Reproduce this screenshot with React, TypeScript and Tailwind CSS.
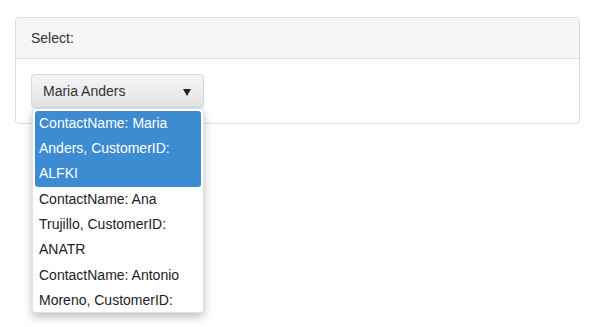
const options = [
  { name: "Maria Anders", id: "ALFKI" },
  { name: "Ana Trujillo", id: "ANATR" },
  { name: "Antonio Moreno", id: "ANTON" },
]

export default function App() {
  return (
    <div className="min-h-[327px] bg-white pt-[17px] font-['Helvetica_Neue','Liberation_Sans',Arial,sans-serif] text-[14px] text-[#333]">
      <div className="ml-[15px] mr-[14px] rounded-[4px] border border-[#ddd]">
        <div className="rounded-t-[3px] border-b border-[#ddd] bg-[#f5f5f5] px-[15px] py-[10px] leading-[20px]">
          Select:
        </div>

        <div className="p-[15px]">
          <div className="relative w-[173px]">
            <button className="flex h-[34px] w-full items-center justify-between rounded-[4px] border border-[#d6d6d6] bg-gradient-to-b from-[#f4f4f4] to-[#e4e4e4] pl-[11px] pr-[12px] text-left shadow-[0_1px_1px_rgba(0,0,0,0.08)]">
              <span>Maria Anders</span>
              <svg width="8" height="7" viewBox="0 0 8 7" className="mt-[2px]">
                <path d="M0 0 L8 0 L4 7 Z" fill="#222" />
              </svg>
            </button>

            <ul className="absolute left-px top-[34px] z-10 h-[205px] w-[172px] overflow-hidden rounded-[4px] border border-[#e2e2e2] bg-white p-[2px] shadow-[0_4px_10px_rgba(0,0,0,0.25)]">
              {options.map((o, i) => (
                <li
                  key={o.id}
                  className={
                    i === 0
                      ? "rounded-[3px] bg-[#3d8bd1] px-[4px] pb-px leading-[25px] text-white"
                      : "px-[4px] pb-px leading-[25px] text-[#222]"
                  }
                >
                  ContactName: {o.name}, CustomerID: {o.id}
                </li>
              ))}
            </ul>
          </div>
        </div>
      </div>
    </div>
  )
}
